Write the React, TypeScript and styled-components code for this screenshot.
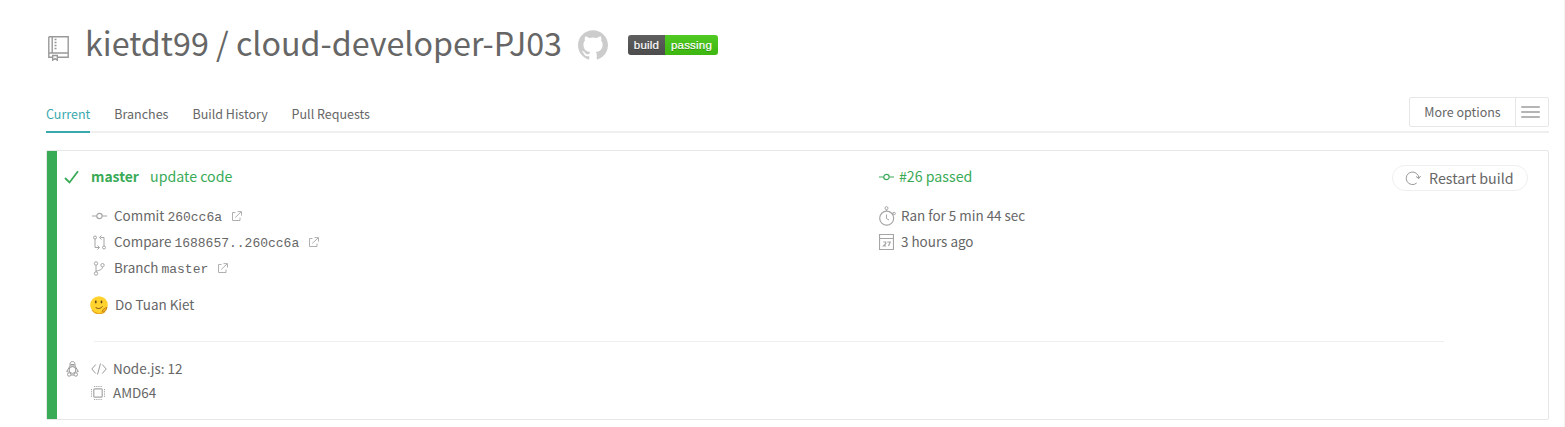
import React from "react";
import styled, { createGlobalStyle } from "styled-components";

const Global = createGlobalStyle`
  * { box-sizing: border-box; }
  body { margin: 0; background: #fff; }
`;

const Page = styled.div`
  width: 1565px;
  height: 427px;
  padding: 0 15px 0 46px;
  border-right: 1px solid #f1f1f1;
  color: #666;
  font-family: "Noto Sans CJK SC", "Noto Sans", sans-serif;
  font-size: 13.45px;
  overflow: hidden;
`;

const Icon = styled.svg<{ $size: number; $w?: number; $color?: string }>`
  display: block;
  flex: none;
  width: ${(p) => p.$w ?? p.$size}px;
  height: ${(p) => p.$size}px;
  color: ${(p) => p.$color ?? "#a5a5a5"};
  fill: none;
  stroke: currentColor;
`;

const Header = styled.header`
  display: flex;
  align-items: center;
  height: 90px;
`;

const RepoIcon = styled.div`
  width: 39px;
  padding: 6px 0 0 2px;
`;

const Title = styled.h1`
  margin: 0 16px 6px 0;
  width: 477px;
  font-size: 32.25px;
  font-weight: 400;
  line-height: 48px;
  white-space: nowrap;
`;

const Badge = styled.div`
  display: flex;
  width: 90px;
  height: 20px;
  margin-left: 20px;
  border-radius: 3px;
  overflow: hidden;
  font: 11.5px/20px "Liberation Sans", Arial, sans-serif;
  color: #fff;
  text-shadow: 0 1px 0 rgba(1, 1, 1, 0.3);
`;

const BadgePart = styled.span<{ $color: string; $width: number }>`
  width: ${(p) => p.$width}px;
  text-align: center;
  letter-spacing: 0.2px;
  -webkit-text-stroke: 0.2px #fff;
  background: linear-gradient(rgba(187, 187, 187, 0.1), rgba(0, 0, 0, 0.1)), ${(p) => p.$color};
`;

const TabBar = styled.nav`
  display: flex;
  justify-content: space-between;
  height: 43px;
  border-bottom: 2px solid #efefef;
`;

const Tabs = styled.div`
  display: flex;
  gap: 24px;
  padding-top: 7px;
`;

const Tab = styled.a<{ $active?: boolean; $width: number }>`
  width: ${(p) => p.$width}px;
  height: 36px;
  font-size: 12.5px;
  line-height: 34px;
  white-space: nowrap;
  color: ${(p) => (p.$active ? "#39a9ae" : "#666")};
  border-bottom: 2px solid ${(p) => (p.$active ? "#39a9ae" : "transparent")};
`;

const Options = styled.button`
  display: flex;
  width: 140px;
  height: 30px;
  margin-top: 7px;
  padding: 0;
  border: 1px solid #e7e7e7;
  border-radius: 2px;
  background: #fff;
  color: #666;
  font: 12.5px/28px "Noto Sans CJK SC", sans-serif;
`;

const OptionsLabel = styled.span`
  width: 106px;
  border-right: 1px solid #e7e7e7;
  white-space: nowrap;
`;

const Burger = styled.span`
  display: flex;
  flex-direction: column;
  gap: 3px;
  margin: 8px 0 0 5px;
`;

const BurgerLine = styled.i`
  width: 19px;
  height: 2px;
  border-radius: 1px;
  background: #b5b5b5;
`;

const Card = styled.section`
  width: 1503px;
  height: 270px;
  margin-top: 17px;
  border: 1px solid #e7e7e7;
  border-radius: 2px;
  display: flex;
`;

const StatusBar = styled.div`
  width: 10px;
  background: #39aa56;
`;

const CardBody = styled.div`
  flex: 1;
  padding: 13px 20px 0 7px;
`;

const Summary = styled.div`
  display: grid;
  grid-template-columns: 815px 1fr auto;
  height: 177px;
`;

const Row = styled.div<{ $indent?: number; $gap?: number; $height?: number }>`
  display: flex;
  align-items: center;
  height: ${(p) => p.$height ?? 26}px;
  padding-left: ${(p) => p.$indent ?? 0}px;
  gap: ${(p) => p.$gap ?? 7}px;
  white-space: nowrap;
`;

const Lead = styled(Row)`
  margin-bottom: 13px;
  color: #39aa56;
  font-size: 14.2px;
`;

const Branch = styled.strong`
  margin: 0 1px 2px 5px;
  font-size: 13.9px;
  font-weight: 700;
`;

const Label = styled.span`
  margin-bottom: 2px;
  white-space: pre;
`;

const Mono = styled.code`
  margin: 3px 3px 0 -7px;
  font: 13px/24px "Liberation Mono", monospace;
`;

const Author = styled(Row)`
  margin-top: 11px;
`;

const Restart = styled.button`
  display: flex;
  align-items: center;
  gap: 8px;
  width: 136px;
  height: 26px;
  margin-top: 1px;
  padding: 0 0 0 12px;
  border: 1px solid #efefef;
  border-radius: 13px;
  background: #fff;
  color: #666;
  font: 14.25px/24px "Noto Sans CJK SC", sans-serif;
  white-space: nowrap;
`;

const Divider = styled.hr`
  width: 1350px;
  height: 1px;
  margin: 0 0 15px 30px;
  border: 0;
  background: #efefef;
`;

const External = () => (
  <Icon $size={10} viewBox="0 0 10 10" $color="#b0b0b0">
    <path d="M3.500 1.500h-3v8h7.500v-3M3.200 6.500 9 1M5.500.600h4v4" />
  </Icon>
);

const CommitIcon = ({ color }: { color?: string }) => (
  <Icon $size={8} $w={15} viewBox="0 0 15 8" $color={color}>
    <path d="M0 4h4.700M10.300 4H15" strokeWidth="1.100" />
    <circle cx="7.500" cy="4" r="2.700" strokeWidth="1.200" />
  </Icon>
);

export default function App() {
  return (
    <>
      <Global />
      <Page>
        <Header>
          <RepoIcon>
            <Icon $size={25} $w={21} viewBox="0 0 21 25" $color="#999" strokeWidth="1.400">
              <path d="M.8.8h19.400v20.400h-11M4.500 21.200H.8V.8M.8 17h19.400M4.200.8V17" />
              <path d="M6.500 3.500h2M6.500 6.500h2M6.500 9.500h2M6.500 12.500h2" />
              <path d="M4.700 19.500v4.700l2.300-1.700 2.300 1.700v-4.700z" />
            </Icon>
          </RepoIcon>
          <Title>kietdt99 / cloud-developer-PJ03</Title>
          <Icon $size={30} viewBox="0 0 16 15.700" $color="#ccc">
            <path
              fill="currentColor"
              stroke="none"
              d="M8 0C3.580 0 0 3.580 0 8c0 3.540 2.290 6.530 5.470 7.590.4.070.55-.17.55-.38 0-.19-.01-.82-.01-1.490-2.010.37-2.530-.49-2.690-.94-.09-.23-.48-.94-.82-1.130-.28-.15-.68-.52-.01-.53.63-.01 1.080.58 1.230.82.72 1.210 1.870.87 2.330.66.07-.52.28-.87.51-1.070-1.780-.2-3.640-.89-3.640-3.950 0-.87.31-1.590.82-2.150-.08-.2-.36-1.020.08-2.120 0 0 .67-.21 2.200.82.64-.18 1.320-.27 2-.27s1.360.09 2 .27c1.530-1.040 2.200-.82 2.200-.82.44 1.100.16 1.920.08 2.120.51.56.82 1.270.82 2.150 0 3.070-1.870 3.750-3.650 3.950.29.25.54.73.54 1.480 0 1.070-.01 1.930-.01 2.200 0 .21.15.46.55.38A8.013 8.013 0 0 0 16 8c0-4.420-3.580-8-8-8z"
            />
          </Icon>
          <Badge>
            <BadgePart $color="#555" $width={37}>build</BadgePart>
            <BadgePart $color="#4c1" $width={53}>passing</BadgePart>
          </Badge>
        </Header>

        <TabBar>
          <Tabs>
            <Tab $active $width={44.3}>Current</Tab>
            <Tab $width={54.2}>Branches</Tab>
            <Tab $width={75.1}>Build History</Tab>
            <Tab $width={79}>Pull Requests</Tab>
          </Tabs>
          <Options>
            <OptionsLabel>More options</OptionsLabel>
            <Burger>
              <BurgerLine />
              <BurgerLine />
              <BurgerLine />
            </Burger>
          </Options>
        </TabBar>

        <Card>
          <StatusBar />
          <CardBody>
            <Summary>
              <div>
                <Lead>
                  <Icon $size={14} $w={15} viewBox="0 0 15 14" $color="#39aa56">
                    <path d="m1 8 4.500 4.500L14 1.200" strokeWidth="1.800" />
                  </Icon>
                  <Branch>master</Branch>
                  <Label>&nbsp;update code</Label>
                </Lead>
                <Row $indent={28}>
                  <CommitIcon />
                  <Label>Commit </Label>
                  <Mono>260cc6a</Mono>
                  <External />
                </Row>
                <Row $indent={28}>
                  <Icon $size={15} viewBox="0 0 15 15">
                    <circle cx="3" cy="2.500" r="1.500" />
                    <circle cx="12" cy="12.500" r="1.500" />
                    <path d="M3 4v8.500h4M5.500 10.500l2 2-2 2M12 11V2.500H8.500M9.500.500l-2 2 2 2" />
                  </Icon>
                  <Label>Compare </Label>
                  <Mono>1688657..260cc6a</Mono>
                  <External />
                </Row>
                <Row $indent={28}>
                  <Icon $size={15} viewBox="0 0 15 15">
                    <circle cx="4" cy="2.500" r="1.700" />
                    <circle cx="4" cy="12.500" r="1.700" />
                    <circle cx="10.500" cy="4.200" r="1.700" />
                    <path d="M4 4.200v6.600M10.500 5.900c0 2.700-2.500 3.200-6.500 4.300" />
                  </Icon>
                  <Label>Branch </Label>
                  <Mono>master</Mono>
                  <External />
                </Row>
                <Author $indent={26}>
                  <Icon $size={18} viewBox="0 0 18 18" stroke="none">
                    <circle cx="9" cy="9" r="8.800" fill="#ffd22e" stroke="none" />
                    <path d="M2 14a8.800 8.800 0 0 0 13 1.500" stroke="#eaa51d" strokeWidth="1.200" />
                    <ellipse cx="5.800" cy="6" rx=".9" ry="1.400" fill="#65451b" stroke="none" />
                    <ellipse cx="11.500" cy="6" rx=".9" ry="1.400" fill="#65451b" stroke="none" />
                    <path d="M5.500 11c1.500 2 4.500 2.200 7-.5" stroke="#744b16" strokeWidth="1" />
                    <path d="m12 15.500 1.500-2.500 3.500-1.800-1.200 3.300-2 1.500z" fill="#f3b51f" stroke="#bd7b12" strokeWidth=".8" />
                  </Icon>
                  <Label>Do Tuan Kiet</Label>
                </Author>
              </div>

              <div>
                <Lead $gap={5}>
                  <CommitIcon color="#39aa56" />
                  <Label>#26 passed</Label>
                </Lead>
                <Row $gap={5}>
                  <Icon $size={20} $w={17} viewBox="0 0 17 20">
                    <circle cx="7.700" cy="12.200" r="7" strokeWidth="1.200" />
                    <circle cx="7.500" cy="2.200" r="1.500" />
                    <path d="M7.500 3.700v1.500M7.500 8.500v4l2.500 1.500M13 7.500l1.500-1" />
                    <circle cx="15.200" cy="7.500" r="1.200" />
                  </Icon>
                  <Label>Ran for 5 min 44 sec</Label>
                </Row>
                <Row>
                  <Icon $size={16} $w={15} viewBox="0 0 15 16">
                    <path d="M.5.5h14v15H.5zM.5 4.500h14" strokeWidth="1.200" />
                    <path d="M4.300 8h2.400v1.700L4.500 12h2.700M8.300 8h2.900L9.500 12" strokeWidth="1.200" />
                  </Icon>
                  <Label>3 hours ago</Label>
                </Row>
              </div>

              <Restart>
                <Icon $size={15} $w={16} viewBox="0 0 16 15" $color="#999">
                  <path d="M11.700 12A6.300 6.300 0 1 1 13.800 7.500M11 5.500l2.800 2 1.800-2.500" />
                </Icon>
                <span>Restart build</span>
              </Restart>
            </Summary>

            <Divider />

            <Row $height={24} $gap={11} $indent={1}>
              <Icon $size={16} $w={15} viewBox="0 0 15 16" $color="#999">
                <path d="M5 5V3.500C5 1.500 6 .6 7.500.6S10 1.500 10 3.500V5M5.500 3.500h4M5.500 5h4" />
                <path d="M5 5 1.700 10.500l2 .5M10 5l3.300 5.500-2 .5" />
                <circle cx="7.500" cy="9" r="3.400" />
                <circle cx="4.200" cy="13.500" r="1.700" />
                <circle cx="10.800" cy="13.500" r="1.700" />
                <path d="M6 14h3" />
              </Icon>
              <Row $gap={6}>
                <Icon $size={12} $w={16} viewBox="0 0 16 12" $color="#999">
                  <path d="M4.700 1.500.8 6l3.900 4.500M11.300 1.500 15.200 6l-3.900 4.500M9.500.5l-3 11" />
                </Icon>
                <Label>Node.js: 12</Label>
              </Row>
            </Row>
            <Row $height={24} $indent={27} $gap={8}>
              <Icon $size={14} viewBox="0 0 14 14">
                <rect x="2.800" y="2.800" width="8.400" height="8.400" rx="1" strokeWidth="1.200" />
                <path d="M3 .5h8M3 13.500h8M.5 3v8M13.500 3v8" strokeDasharray="1.200 1" />
              </Icon>
              <Label>AMD64</Label>
            </Row>
          </CardBody>
        </Card>
      </Page>
    </>
  );
}
